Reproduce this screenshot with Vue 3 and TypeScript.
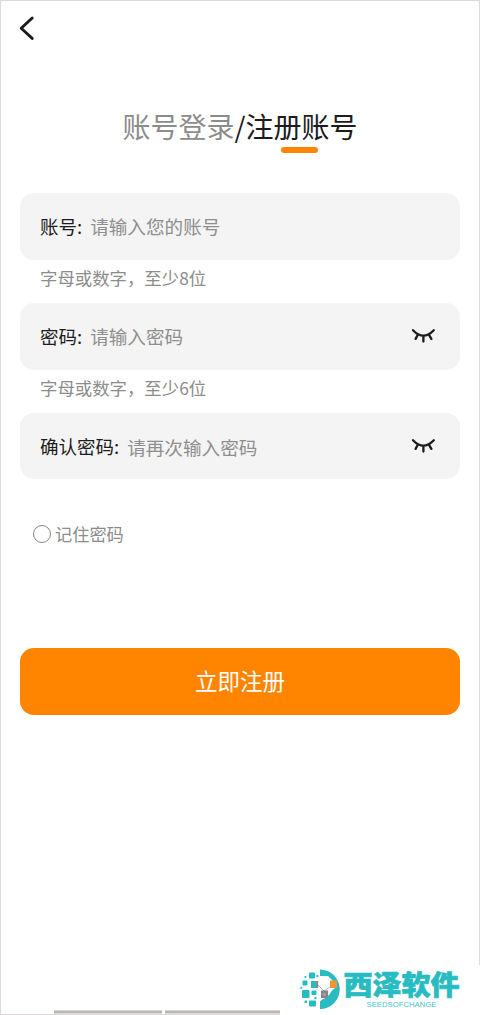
<script setup lang="ts">
import { ref } from 'vue'

interface Field {
  label: string
  placeholder: string
  hint?: string
  secret: boolean
}

const fields: Field[] = [
  { label: '账号:', placeholder: '请输入您的账号', hint: '字母或数字，至少8位', secret: false },
  { label: '密码:', placeholder: '请输入密码', hint: '字母或数字，至少6位', secret: true },
  { label: '确认密码:', placeholder: '请再次输入密码', secret: true },
]

const remember = ref(false)
</script>

<template>
  <main class="page">
    <header class="bar">
      <svg class="back" width="20" height="28" viewBox="0 0 20 28">
        <path d="M14.2 4 L3.2 14.3 L14.2 24.4" />
      </svg>
    </header>

    <nav class="tabs">
      <span class="muted">账号登录</span><span>/</span><span class="active">注册账号</span>
    </nav>

    <form class="form" @submit.prevent>
      <template v-for="f in fields" :key="f.label">
        <label class="field">
          <span class="label">{{ f.label }}</span>
          <span class="placeholder">{{ f.placeholder }}</span>
          <svg v-if="f.secret" class="eye" width="26" height="18" viewBox="0 0 26 18">
            <path d="M2 3.2 Q12.3 14 22.8 3.2 M6.8 7.8 L4.6 11.9 M12.4 9 V14.6 M18 7.8 L20.4 11.9" />
          </svg>
        </label>
        <p v-if="f.hint" class="hint">{{ f.hint }}</p>
      </template>

      <div class="remember" @click="remember = !remember">
        <span class="radio" :class="{ checked: remember }"></span>
        <span class="remember-text">记住密码</span>
      </div>
      <button class="submit" type="submit">立即注册</button>
    </form>

    <div class="handles"><i class="first"></i><i class="second"></i></div>

    <div class="brand">
      <svg width="200" height="50" viewBox="280 965 200 50">
        <g fill="#27bcc1">
          <path d="M320 969.5 A19.5 19.5 0 0 1 320 1009 V1001.5 L326 996 L335 988 L333 981 L328 976 L320 976 Z" />
          <rect x="309" y="972.5" width="6" height="6" rx="1" />
          <rect x="302.5" y="980.5" width="5" height="5" rx="1" />
          <rect x="311" y="981" width="6" height="7" />
          <rect x="302" y="990" width="7.5" height="8" rx="1" />
          <rect x="311.5" y="990.5" width="5" height="4.5" rx="1" />
          <rect x="309" y="1000.5" width="7" height="6" rx="1" />
          <rect x="304.5" y="1000.5" width="2.5" height="2.5" rx=".5" />
          <rect x="314.5" y="997" width="2" height="2" />
          <rect x="304.5" y="976" width="1.8" height="1.8" />
          <rect x="316.5" y="975" width="2" height="2" />
          <rect x="300.3" y="987" width="1.8" height="1.8" />
        </g>
        <path d="M319 976 Q328 976.5 331 983 Q334 991 327 997 Q324 999.5 319 1000 Z" fill="#fff" />
        <path d="M317 984 L324 991 L334 984" fill="none" stroke="#aab9b9" stroke-width="1" />
        <rect x="316" y="981" width="2.2" height="7" fill="#898c8c" />
        <rect x="321" y="990.5" width="7" height="7.5" fill="#858585" />
        <rect x="322.5" y="993" width="3.5" height="3" fill="#9c9c9c" />
        <rect x="330" y="980.5" width="7" height="7.5" fill="#f39532" />
        <text class="brand-name" x="343.5" y="994.5" textLength="116" lengthAdjust="spacingAndGlyphs">西泽软件</text>
        <text class="brand-sub" x="366.5" y="1007" textLength="70" lengthAdjust="spacingAndGlyphs">SEEDSOFCHANGE</text>
      </svg>
    </div>
  </main>
</template>

<style>
body {
  margin: 0;
  background: #fff;
}
</style>

<style scoped>
.page {
  position: relative;
  box-sizing: border-box;
  width: 480px;
  height: 1015px;
  padding: 1px;
  overflow: hidden;
  background: #fff;
  box-shadow: inset 0 0 0 1px #dedad9;
  color: #1c1c1c;
  font-family: "Noto Sans CJK SC", sans-serif;
}

.bar {
  height: 55px;
  padding: 13px 0 0 17px;
  box-sizing: border-box;
}

.back {
  display: block;
}

.back path,
.eye path {
  fill: none;
  stroke: #1c1c1c;
  stroke-linecap: round;
  stroke-linejoin: round;
}

.back path {
  stroke-width: 2.9;
}

.tabs {
  display: flex;
  justify-content: center;
  height: 43px;
  margin-top: 50px;
  font-size: 28px;
  line-height: 40px;
}

.muted {
  color: #8c8c8c;
}

.active {
  position: relative;
}

.active::after {
  content: "";
  position: absolute;
  left: 35.5px;
  top: 41px;
  width: 37px;
  height: 5.5px;
  border-radius: 3px;
  background: #ff8400;
}

.form {
  margin: 44px 19px 0;
}

.field {
  display: flex;
  align-items: center;
  box-sizing: border-box;
  height: 67px;
  padding: 0 23px 2px 20px;
  border-radius: 14px;
  background: #f4f4f4;
  font-size: 18.5px;
}

.placeholder {
  margin-left: 8px;
  color: #8e8e8e;
  font-size: 18.6px;
}

.eye {
  margin-left: auto;
}

.eye path {
  stroke-width: 2.3;
}

.hint {
  height: 43px;
  margin: 0 20px;
  color: #8c8c8c;
  font-size: 17.4px;
  line-height: 36px;
}

.field:last-of-type {
  height: 66px;
  padding-bottom: 0;
}

.remember {
  display: flex;
  align-items: center;
  height: 26px;
  margin: 42px 0 0 13px;
  gap: 4px;
  color: #8c8c8c;
  font-size: 17.2px;
}

.remember-text {
  padding-bottom: 2px;
}

.radio {
  box-sizing: border-box;
  width: 18px;
  height: 18px;
  border: 1.5px solid #858585;
  border-radius: 50%;
}

.radio.checked {
  background: #ff8400;
}

.submit {
  display: block;
  width: 440px;
  height: 66.5px;
  margin-top: 101px;
  padding: 0 0 2px;
  border: 0;
  border-radius: 14px;
  background: #ff8400;
  color: #fff;
  font: 22.5px/64px "Noto Sans CJK SC", sans-serif;
}

.handles {
  position: absolute;
  left: 54px;
  bottom: 0;
  display: flex;
  gap: 3px;
}

.handles i {
  height: 2px;
  border-top: 1px solid #d6d4d3;
  border-bottom: 2px solid #dedad9;
  background: #b8b8b8;
}

.first {
  width: 108px;
}

.second {
  width: 115px;
}

.brand {
  position: absolute;
  right: 0;
  bottom: 0;
  width: 200px;
  height: 50px;
  background: #fff;
}

.brand svg {
  display: block;
  overflow: visible;
}

.brand-name {
  fill: #27bcc1;
  stroke: #27bcc1;
  stroke-width: 0.7px;
  font-size: 27px;
  font-weight: 900;
}

.brand-sub {
  fill: #4cc6ca;
  font: 7.5px "Liberation Sans", Arial, sans-serif;
}
</style>
